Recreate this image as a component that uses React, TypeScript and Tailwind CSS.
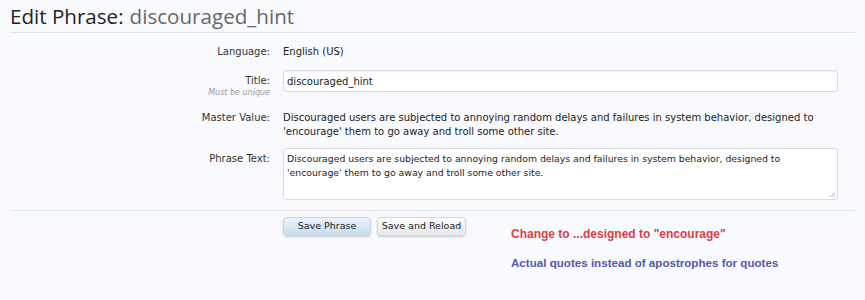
export default function App() {
  const body = { fontFamily: '"DejaVu Sans", Verdana, sans-serif' }
  return (
    <div className="h-[300px] w-[865px] overflow-hidden bg-[#f9fafd] text-[#333]" style={body}>
      <div className="px-[10px] pt-[3px]">
        <h1 className="flex h-[30px] items-center border-b border-[#dfe5ee] pb-[2px] text-[20.6px] leading-none font-normal" style={{ fontFamily: '"Open Sans", "DejaVu Sans", sans-serif' }}>
          <span className="text-[#222]">Edit Phrase:</span>
          <span className="ml-[6px] text-[#666]">discouraged_hint</span>
        </h1>

        <div className="flex flex-col pt-[12px]">
          <div className="flex gap-[13px]">
            <div className="w-[260px] text-right text-[10px] leading-[14px] text-[#333]">Language:</div>
            <div className="text-[10px] leading-[14px] text-[#222]">English (US)</div>
          </div>

          <div className="mt-[11px] flex gap-[13px]">
            <div className="w-[260px] pt-[4px] text-right">
              <div className="text-[10px] leading-[14px] text-[#333]">Title:</div>
              <div className="text-[8px] leading-[10px] text-[#999] italic">Must be unique</div>
            </div>
            <div className="flex h-[22px] w-[555px] items-center rounded-[3px] border border-[#d8dce3] bg-white px-[3px] text-[10px] text-[#222] shadow-[inset_0_1px_1px_rgba(0,0,0,0.06)]">
              discouraged_hint
            </div>
          </div>

          <div className="mt-[13px] flex gap-[13px]">
            <div className="w-[260px] text-right text-[10px] leading-[14px] text-[#333]">Master Value:</div>
            <div className="w-[560px] text-[10px] leading-[14px] text-[#222]">
              Discouraged users are subjected to annoying random delays and failures in system behavior, designed to 'encourage' them to go away and troll some other site.
            </div>
          </div>

          <div className="mt-[9px] flex gap-[13px] pb-[10px]">
            <div className="w-[260px] pt-[4px] text-right text-[10px] leading-[14px] text-[#333]">Phrase Text:</div>
            <div className="relative h-[52px] w-[555px] rounded-[3px] border border-[#d8dce3] bg-white pt-[3px] pr-[40px] pl-[3px] text-[9.3px] leading-[14px] text-[#222]">
              Discouraged users are subjected to annoying random delays and failures in system behavior, designed to 'encourage' them to go away and troll some other site.
              <svg className="absolute right-[1px] bottom-[1px]" width="7" height="7" viewBox="0 0 7 7">
                <path d="M6 1 1 6M6 3.5 3.5 6M6 5.5 5.5 6" stroke="#bbb" strokeWidth="1" />
              </svg>
            </div>
          </div>
        </div>

        <div className="flex border-t border-[#dfe5ee] pt-[5px]">
          <div className="w-[273px]" />
          <div className="flex gap-[6px] pt-[1px]">
            <button className="h-[19px] w-[88px] rounded-[4px] border border-[#c6d6e6] bg-gradient-to-b from-[#eaf3fb] to-[#c7ddef] text-[9.5px] text-[#222] shadow-[0_1px_2px_rgba(0,0,0,0.2)]">
              Save Phrase
            </button>
            <button className="h-[19px] w-[89px] rounded-[4px] border border-[#d5d8dd] bg-gradient-to-b from-[#fbfbfc] to-[#e8e9ec] text-[9.5px] text-[#222] shadow-[0_1px_2px_rgba(0,0,0,0.2)]">
              Save and Reload
            </button>
          </div>
          <div className="ml-[45px] pt-[11px] font-bold" style={{ fontFamily: '"Liberation Sans", Arial, sans-serif' }}>
            <div className="text-[12px] leading-[14px] text-[#d7404a]">Change to ...designed to "encourage"</div>
            <div className="mt-[15px] text-[11.6px] leading-[14px] text-[#5458ae]">Actual quotes instead of apostrophes for quotes</div>
          </div>
        </div>
      </div>
    </div>
  )
}
